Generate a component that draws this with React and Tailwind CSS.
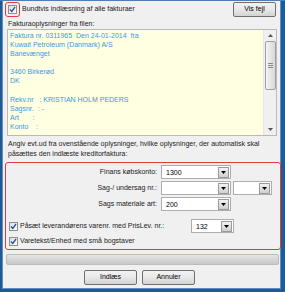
import React from 'react'

function Check({ className = '' }) {
  return (
    <span className={`flex h-[9px] w-[9px] items-center justify-center border border-[#8e8f8f] bg-gradient-to-br from-[#dcdcdc] to-white ${className}`}>
      <svg width="7" height="7" viewBox="0 0 7 7">
        <path d="M1 3.5 L2.8 5.5 L6 1" fill="none" stroke="#2a4f9e" strokeWidth="1.3" />
      </svg>
    </span>
  )
}

function Combo({ value, w }) {
  return (
    <div className={`flex h-[14px] items-center border border-[#abadb3] bg-white ${w}`}>
      <span className="flex-1 pl-[4px] text-[7px] leading-none text-black">{value}</span>
      <span className="mr-[1px] flex h-[11px] w-[11px] items-center justify-center border border-[#9a9a9a] bg-gradient-to-b from-[#f2f2f2] to-[#cfcfcf]">
        <svg width="5" height="3" viewBox="0 0 5 3">
          <path d="M0 0 H5 L2.5 3 Z" fill="#000" />
        </svg>
      </span>
    </div>
  )
}

function Btn({ children, w }) {
  return (
    <div className={`flex h-[15px] items-center justify-center rounded-[2px] border border-[#707070] bg-gradient-to-b from-[#f2f2f2] via-[#e8e8e8] to-[#d3d3d3] text-[7px] text-black ${w}`}>
      {children}
    </div>
  )
}

const lines = [
  'Faktura nr. 0311965  Den 24-01-2014  fra',
  'Kuwait Petroleum (Danmark) A/S',
  'Banevænget',
  '',
  '3460 Birkerød',
  'DK',
  '',
  'Rekv.nr   : KRISTIAN HOLM PEDERS',
  'Sagsnr.  : -',
  'Art       :',
  'Konto    :',
]

export default function App() {
  return (
    <div className="h-[292px] w-[285px] border-t border-[#4b7fb5] bg-[#1e5b92] pb-[3px] pl-[2px] pr-[4px]" style={{ fontFamily: '"Liberation Sans", Arial, sans-serif' }}>
      <div className="flex h-full flex-col border-l border-r border-b border-[#5d8fc4] bg-[#f0f0f0] text-[7px] text-[#1a1a1a]">
        {/* top row */}
        <div className="flex h-[16px] items-center justify-between pl-[2px] pr-[4px]">
          <div className="flex items-center">
            <span className="flex h-[15px] w-[15px] items-center justify-center rounded-[3px] border border-[#e23b3b]">
              <Check />
            </span>
            <span className="ml-[2px]">Bundtvis indlæsning af alle fakturaer</span>
          </div>
          <Btn w="w-[43px]">Vis fejl</Btn>
        </div>

        <div className="mt-[2px] pl-[5px] leading-[9px]">Fakturaoplysninger fra filen:</div>

        {/* info box */}
        <div className="ml-[4px] mt-[1px] flex h-[107px] w-[270px] border border-[#b9b9b9]">
          <div className="flex-1 bg-[#ffffe1] pl-[2px] pt-[1px] text-[7px] leading-[9.1px] text-[#3b97e6] whitespace-pre">
            {lines.map((l, i) => (
              <div key={i} className="h-[9.1px]">{l}</div>
            ))}
          </div>
          <div className="flex w-[13px] flex-col items-center bg-[#f0f0f0] border-l border-[#e6e6e6]">
            <svg className="mt-[4px]" width="5" height="3" viewBox="0 0 5 3">
              <path d="M0 3 H5 L2.5 0 Z" fill="#555" />
            </svg>
            <div className="mt-[4px] flex h-[49px] w-[11px] flex-col items-center justify-center gap-[1px] rounded-[2px] border border-[#a0a0a0] bg-gradient-to-r from-[#f4f4f4] to-[#d8d8d8]">
              <span className="h-px w-[5px] bg-[#8a8a8a]" />
              <span className="h-px w-[5px] bg-[#8a8a8a]" />
              <span className="h-px w-[5px] bg-[#8a8a8a]" />
            </div>
            <div className="flex-1" />
            <svg className="mb-[4px]" width="5" height="3" viewBox="0 0 5 3">
              <path d="M0 0 H5 L2.5 3 Z" fill="#555" />
            </svg>
          </div>
        </div>

        <div className="mt-[3px] pl-[5px] leading-[10px]">
          Angiv evt.ud fra ovenstående oplysninger, hvilke oplysninger, der automatisk skal
          <br />
          påsættes den indlæste kreditorfaktura:
        </div>

        {/* red box */}
        <div className="ml-[2px] mt-[3px] flex h-[88px] w-[276px] flex-col rounded-[3px] border border-[#e03a3a] pt-[1px]">
          <div className="flex h-[16px] items-center">
            <span className="w-[155px] pr-[4px] text-right">Finans købskonto:</span>
            <Combo value="1300" w="w-[70px]" />
          </div>
          <div className="flex h-[16px] items-center">
            <span className="w-[155px] pr-[4px] text-right">Sag-/ undersag nr.:</span>
            <Combo value="" w="w-[70px]" />
            <span className="w-[2px]" />
            <Combo value="" w="w-[39px]" />
          </div>
          <div className="flex h-[16px] items-center">
            <span className="w-[155px] pr-[4px] text-right">Sags materiale art:</span>
            <Combo value="200" w="w-[70px]" />
          </div>
          <div className="mt-[6px] flex h-[16px] items-center pl-[3px]">
            <Check />
            <span className="ml-[2px] w-[171px]">Påsæt leverandørens varenr. med PrisLev. nr.:</span>
            <Combo value="132" w="w-[43px]" />
          </div>
          <div className="flex h-[14px] items-center pl-[3px]">
            <Check />
            <span className="ml-[2px]">Varetekst/Enhed med små bogstaver</span>
          </div>
        </div>

        {/* progress */}
        <div className="ml-[3px] mt-[4px] h-[11px] w-[273px] rounded-[2px] border border-[#bcbcbc] bg-gradient-to-b from-[#e6e6e6] via-[#d6d6d6] to-[#c8c8c8]" />

        <div className="mt-[5px] flex justify-center gap-[5px] pr-[4px]">
          <Btn w="w-[53px]">Indlæs</Btn>
          <Btn w="w-[53px]">Annuler</Btn>
        </div>
      </div>
    </div>
  )
}
